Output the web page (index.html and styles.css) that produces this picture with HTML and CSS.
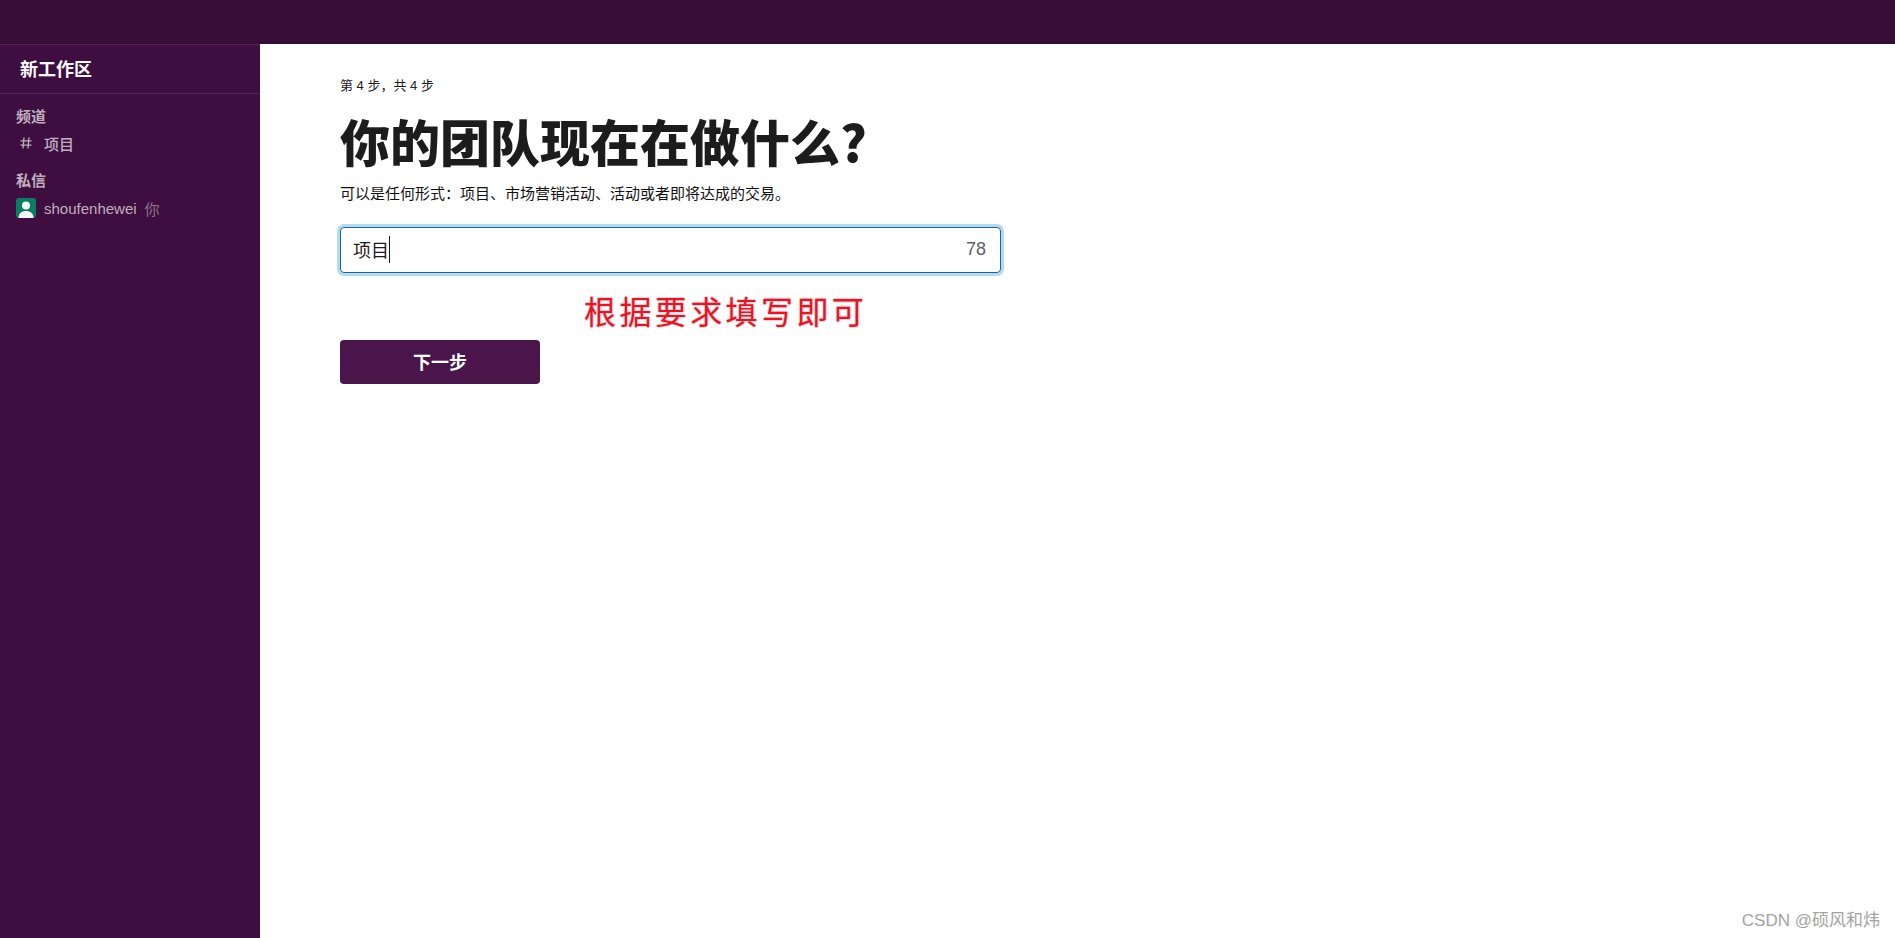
FILE: index.html
```html
<!DOCTYPE html>
<html lang="zh">
<head>
    <meta charset="UTF-8">
    <title>新工作区</title>
    <link rel="stylesheet" href="styles.css">
</head>
<body>
    <div class="topbar"></div>
    <div class="layout">
        <aside class="sidebar">
            <div class="workspace">新工作区</div>
            <div class="side-title channel-title">频道</div>
            <div class="side-row channel">
                <svg class="hash" viewBox="0 0 12 12"><path d="M4 .5 3 11.500M9 .5 8 11.500M.5 3.800h11M.5 8.200h11" fill="none" stroke="currentColor" stroke-width="1.300"/></svg>
                项目
            </div>
            <div class="side-title dm-title">私信</div>
            <div class="side-row">
                <svg class="avatar" viewBox="0 0 20 20"><rect width="20" height="20" rx="3" fill="#0b7d62"/><circle cx="10" cy="7.500" r="4" fill="#f4f7f6"/><path d="M2.500 20c0-4.500 3.200-7 7.500-7s7.500 2.500 7.500 7z" fill="#f4f7f6"/></svg>
                <span>shoufenhewei</span><span class="you">你</span>
            </div>
        </aside>
        <main class="content">
            <p class="step">第 4 步，共 4 步</p>
            <h1 class="title">你的团队现在在做什么?</h1>
            <p class="subtitle">可以是任何形式：项目、市场营销活动、活动或者即将达成的交易。</p>
            <div class="input-box">
                <span class="input-text">项目</span><span class="caret"></span>
                <span class="count">78</span>
            </div>
            <div class="note">根据要求填写即可</div>
            <button class="next-btn">下一步</button>
        </main>
    </div>
    <div class="watermark">CSDN @硕风和炜</div>
</body>
</html>
```

FILE: styles.css
```css
* {
    margin: 0;
    padding: 0;
    box-sizing: border-box;
}

body {
    font-family: "Liberation Sans", "Noto Sans CJK SC", sans-serif;
    height: 938px;
    overflow: hidden;
    background: white;
    color: #1d1c1d;
}

.topbar {
    height: 44px;
    background: #350d36;
}

.layout {
    display: flex;
    height: 894px;
}

.sidebar {
    width: 260px;
    background: #3f0e40;
    border-top: 1px solid #522653;
    color: #bfaebf;
    font-size: 15px;
}

.workspace {
    height: 49px;
    padding: 10px 0 0 20px;
    border-bottom: 1px solid #522653;
    font-size: 18px;
    font-weight: 700;
    color: white;
}

.side-title {
    margin: 11px 0 0 16px;
    height: 24px;
    font-weight: 700;
    font-size: 15px;
}

.dm-title {
    margin-top: 12px;
    height: 25px;
}

.side-row {
    display: flex;
    align-items: center;
    height: 28px;
    padding-left: 16px;
    font-size: 15px;
}

.channel {
    font-weight: 500;
}

.hash {
    width: 12px;
    height: 12px;
    margin: 0 12px 0 4px;
}

.avatar {
    width: 20px;
    height: 20px;
    margin-right: 8px;
}

.you {
    margin-left: 8px;
    color: #8f7590;
}

.content {
    flex: 1;
    padding: 31px 0 0 80px;
}

.step {
    font-size: 13px;
    height: 20px;
}

.title {
    font-family: "Noto Sans CJK SC", sans-serif;
    font-size: 50px;
    line-height: 70px;
    margin-top: 10px;
    font-weight: 900;
    color: #1d1c1d;
}

.subtitle {
    font-size: 15px;
    line-height: 20px;
    margin-top: 9px;
    color: #111;
}

.input-box {
    display: flex;
    align-items: center;
    width: 661px;
    height: 46px;
    margin-top: 23px;
    padding: 0 14px 2px 12px;
    border: 1px solid #1264a3;
    border-radius: 4px;
    box-shadow: 0 0 0 3px #b5dcee;
    font-size: 18px;
}

.caret {
    width: 1px;
    height: 27px;
    background: #1d1c1d;
}

.count {
    margin-left: auto;
    color: #616061;
}

.note {
    margin: 20px 0 0 244px;
    font-family: "Liberation Serif", "Noto Sans CJK SC", serif;
    font-size: 32px;
    line-height: 40px;
    letter-spacing: 3.4px;
    color: #f01022;
    text-shadow: 1px 0 1px #d8d8d8, -1px 0 1px #d8d8d8, 0 1px 1px #d8d8d8, 0 -1px 1px #d8d8d8;
}

.next-btn {
    display: block;
    width: 200px;
    height: 44px;
    margin-top: 7px;
    padding-bottom: 2px;
    border: none;
    border-radius: 4px;
    background: #4a154b;
    color: white;
    font-family: inherit;
    font-size: 18px;
    font-weight: 700;
}

.watermark {
    position: absolute;
    right: 15px;
    bottom: 7px;
    font-size: 17px;
    color: #a3a3a3;
}
```
